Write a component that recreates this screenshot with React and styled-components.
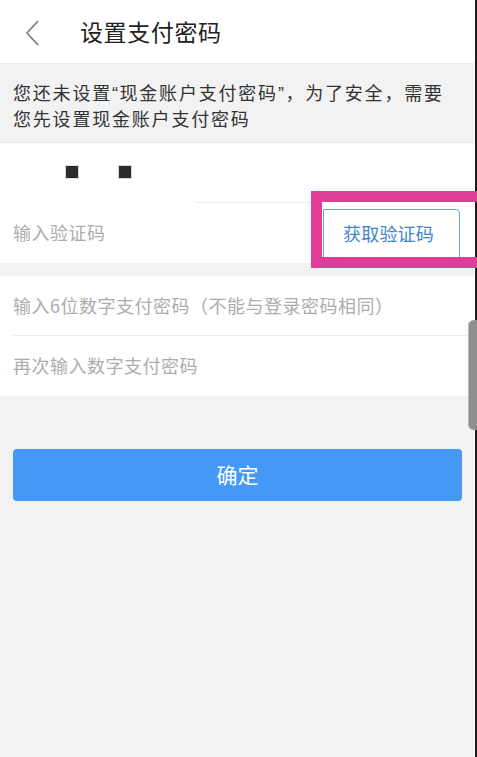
import styled, { createGlobalStyle } from 'styled-components'

const GlobalStyle = createGlobalStyle`
  html, body {
    margin: 0;
    padding: 0;
    background: #f2f2f2;
    font-family: "Noto Sans CJK SC", "Noto Sans", sans-serif;
  }
`

const App = () => (
  <Screen>
    <GlobalStyle />
    <Content>
      <Header>
        <BackButton aria-label="back">
          <svg width="16" height="28" viewBox="0 0 16 28">
            <path d="M13 2 L2 14 L13 26" fill="none" stroke="#7a7a7a" strokeWidth="1.6" />
          </svg>
        </BackButton>
        <Title>设置支付密码</Title>
      </Header>

      <Notice>
        <Line>
          您还未设置<Quote>“</Quote>现金账户支付密码<Quote>”</Quote>，为了安全，需要
        </Line>
        <Line>您先设置现金账户支付密码</Line>
      </Notice>

      <Group>
        <Row $line="left-mid">
          <Dots>
            <Dot />
            <Dot />
          </Dots>
        </Row>
        <Row>
          <Placeholder>输入验证码</Placeholder>
          <CodeButton>获取验证码</CodeButton>
        </Row>
        <Highlight />
      </Group>

      <Group $gap>
        <Row $line="full">
          <Placeholder>输入6位数字支付密码（不能与登录密码相同）</Placeholder>
        </Row>
        <Row>
          <Placeholder>再次输入数字支付密码</Placeholder>
        </Row>
      </Group>

      <Submit>确定</Submit>
    </Content>
    <Edge />
    <Scrollbar />
  </Screen>
)

export default App

const Screen = styled.div`
  position: relative;
  display: flex;
  min-height: 757px;
  overflow: hidden;
`

const Content = styled.div`
  flex: 1;
  display: flex;
  flex-direction: column;
`

const Edge = styled.div`
  width: 2px;
  border-left: 1px solid #fff;
  background: #1c1c1c;
`

const Header = styled.div`
  height: 63px;
  background: #fff;
  display: flex;
  align-items: center;
  border-bottom: 1px solid #ececec;
`

const BackButton = styled.div`
  width: 26px;
  margin-left: 25px;
  margin-right: 29px;
  display: flex;
  align-items: center;
  margin-top: 2px;
`

const Title = styled.div`
  font-size: 23px;
  color: #222;
  letter-spacing: 0.6px;
  margin-bottom: 2px;
`

const Notice = styled.div`
  padding: 16px 13px 0;
  height: 62px;
  border-bottom: 1px solid #e6e6e6;
`

const Line = styled.div`
  font-size: 18px;
  line-height: 24px;
  color: #333;
  letter-spacing: 1.8px;
  white-space: nowrap;
`

const Quote = styled.span`
  font-family: "Liberation Sans", sans-serif;
  letter-spacing: 1.5px;
`

const Group = styled.div`
  position: relative;
  background: #fff;
  margin-top: ${(p) => (p.$gap ? '13px' : '0')};
`

const Row = styled.div`
  position: relative;
  height: 60px;
  display: flex;
  align-items: center;
  justify-content: space-between;
  padding-left: 13px;

  &::after {
    content: '';
    position: absolute;
    bottom: 0;
    height: 1px;
    background: #ededed;
    display: ${(p) => (p.$line ? 'block' : 'none')};
    left: ${(p) => (p.$line === 'left-mid' ? '195px' : '13px')};
    right: ${(p) => (p.$line === 'left-mid' ? '160px' : '0')};
  }
`

const Dots = styled.div`
  display: flex;
  gap: 41px;
  margin-left: 53px;
  margin-bottom: 2px;
`

const Dot = styled.span`
  width: 12px;
  height: 12px;
  background: #2c2c2c;
  box-shadow: 0 0 0 1px #d8d8d8;
`

const Placeholder = styled.div`
  font-size: 18px;
  color: #adadad;
  letter-spacing: 0.5px;
  margin-bottom: 3px;
`

const CodeButton = styled.div`
  align-self: flex-end;
  width: 137px;
  height: 49px;
  margin: 0 14px 5px 0;
  box-sizing: border-box;
  border: 1px solid #6aa6da;
  border-radius: 0 4px 0 0;
  display: flex;
  align-items: center;
  justify-content: center;
  font-size: 18px;
  color: #3f86c8;
  padding: 0 6px 2px 0;
  letter-spacing: 0.2px;
`

const Highlight = styled.div`
  position: absolute;
  left: 311px;
  top: 48px;
  width: 180px;
  height: 77px;
  box-sizing: border-box;
  border: 11px solid #e03c9a;
`

const Submit = styled.div`
  margin: 53px 12px 0 13px;
  height: 52px;
  border-radius: 4px;
  background: #4499f7;
  color: #fff;
  font-size: 21px;
  display: flex;
  align-items: center;
  justify-content: center;
  padding-bottom: 2px;
  box-sizing: border-box;
`

const Scrollbar = styled.div`
  position: absolute;
  right: 0;
  top: 320px;
  width: 9px;
  height: 110px;
  border-radius: 6px 0 0 6px;
  background: #8f8f8f;
  box-shadow: inset 1px 0 0 #b5b5b5;
`
